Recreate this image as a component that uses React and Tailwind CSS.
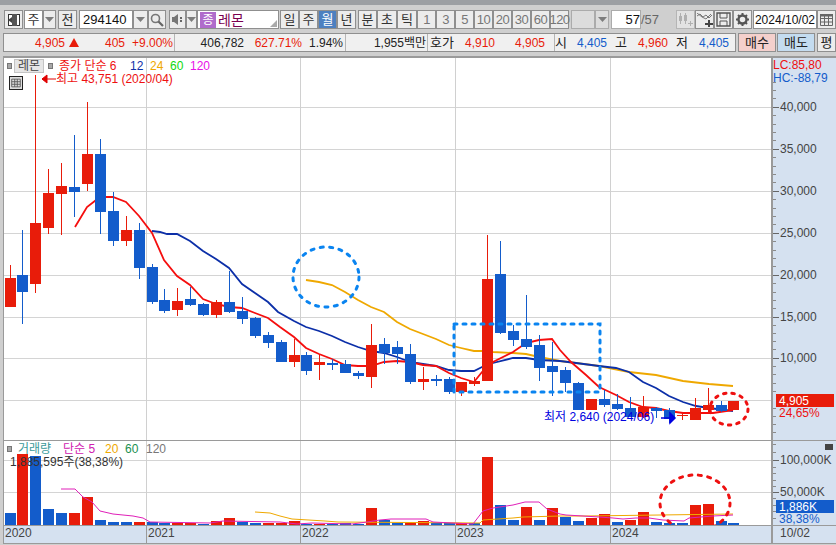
import React from 'react';

const FONT = 'font-["Liberation_Sans","Noto_Sans_CJK_KR",sans-serif]';
const RED = '#e81c0a';
const BLUE = '#135ccb';

// x, bodyTop, bodyBottom, wickTop, wickBottom, red?
const candles = [
  [10, 278, 307, 265, 307, 1], [22, 275, 292, 230, 324, 0], [35, 223, 284, 75, 293, 1], [48, 193, 228, 169, 234, 1],
  [61, 186, 194, 163, 235, 1], [74, 187, 192, 135, 217, 0], [87, 154, 184, 102, 191, 1], [100, 154, 212, 139, 234, 0],
  [113, 211, 241, 192, 246, 0], [126, 230, 241, 216, 246, 1], [139, 230, 268, 223, 279, 0], [152, 267, 302, 264, 304, 0],
  [164, 300, 311, 289, 313, 0], [177, 301, 310, 288, 316, 1], [190, 299, 305, 287, 306, 0], [203, 304, 315, 303, 316, 0],
  [216, 302, 315, 300, 318, 1], [229, 302, 312, 271, 313, 0], [242, 311, 319, 297, 324, 0], [255, 318, 336, 317, 338, 0],
  [268, 335, 343, 332, 348, 0], [281, 342, 362, 340, 362, 0], [294, 355, 362, 339, 367, 1], [306, 355, 371, 352, 375, 0],
  [319, 362, 365, 355, 380, 1], [332, 363, 365, 359, 370, 0], [345, 364, 373, 360, 373, 0], [358, 373, 376, 371, 379, 0],
  [371, 345, 377, 324, 388, 1], [384, 344, 353, 338, 364, 0], [397, 347, 354, 341, 364, 0], [410, 354, 382, 344, 384, 0],
  [423, 379, 382, 367, 390, 1], [436, 379, 381, 375, 386, 0], [449, 379, 392, 377, 394, 0], [461, 382, 392, 382, 396, 1],
  [474, 381, 384, 377, 386, 1], [487, 279, 381, 235, 381, 1], [500, 274, 333, 241, 334, 0], [513, 331, 340, 325, 346, 0],
  [526, 339, 347, 295, 349, 0], [539, 345, 368, 335, 381, 0], [552, 366, 372, 342, 396, 0], [565, 370, 383, 367, 392, 0],
  [578, 383, 410, 382, 410, 0], [591, 399, 410, 399, 410, 1], [604, 399, 405, 390, 407, 0], [617, 404, 409, 394, 410, 0],
  [630, 408, 417, 397, 417, 0], [643, 407, 417, 396, 418, 1], [656, 408, 411, 407, 418, 0], [669, 410, 419, 408, 423, 0],
  [682, 415, 416, 413, 420, 1], [695, 408, 420, 398, 420, 1], [708, 405, 410, 388, 413, 1], [721, 405, 411, 401, 412, 0],
  [733, 401, 410, 401, 410, 1],
];

// x, top, red?
const volumes = [
  [10, 513, 0], [22, 454, 1], [35, 456, 0], [48, 509, 0], [61, 513, 0], [74, 513, 1], [87, 497, 1], [100, 520, 0],
  [113, 522, 0], [126, 522, 0], [139, 522, 1], [152, 522, 0], [164, 523, 0], [177, 523, 1], [190, 523, 1], [203, 524, 0],
  [216, 521, 1], [229, 518, 1], [242, 522, 0], [255, 523, 0], [268, 523, 1], [281, 523, 1], [294, 521, 1], [306, 524, 0],
  [319, 524, 1], [332, 524, 0], [345, 523, 0], [358, 524, 0], [371, 508, 1], [384, 520, 0], [397, 523, 0], [410, 523, 1],
  [423, 521, 1], [436, 523, 0], [449, 523, 0], [461, 523, 1], [474, 523, 0], [487, 457, 1], [500, 505, 0], [513, 520, 0],
  [526, 507, 1], [539, 520, 0], [552, 508, 1], [565, 517, 0], [578, 521, 0], [591, 518, 1], [604, 514, 1], [617, 522, 0],
  [630, 520, 1], [643, 512, 1], [656, 522, 0], [669, 523, 0], [682, 523, 0], [695, 505, 1], [708, 504, 1], [721, 521, 0],
  [733, 523, 0],
];

const ma6 = '75,227 87,207 100,197 113,197 126,202 139,216 152,233 164,260 177,276 190,285 203,299 216,304 229,307 242,308 255,313 268,318 280,327 294,337 306,348 319,354 332,359 345,365 358,366 371,366 384,362 397,361 410,362 423,365 436,366 449,373 461,378 474,382 482,372 493,362 513,352 526,343 539,340 552,339 560,350 571,362 586,375 599,387 616,395 629,402 643,407 656,408 669,411 683,413 699,413 713,413 733,410';
const ma12 = '152,231 160,232 167,234 177,234 190,241 203,251 216,259 229,268 242,284 255,293 268,302 278,312 294,321 306,327 319,331 332,336 345,342 358,347 371,351 384,353 397,357 410,362 423,364 436,366 449,370 461,371 474,371 482,367 493,363 513,358 526,358 539,360 560,361 576,363 599,366 616,368 629,372 643,382 656,388 669,396 683,402 696,406 709,408 733,411';
const ma24 = '306,280 319,282 332,285 345,292 358,300 371,307 384,312 397,322 410,329 423,334 436,339 449,345 461,348 474,351 482,351 493,352 513,353 526,354 539,357 560,361 576,363 599,366 629,372 656,375 683,381 709,384 733,386';
const volMa5 = '61,489 75,489 83,497 92,502 100,511 113,514 133,516 143,518 150,522 210,523 223,521 280,522 297,524 312,523 352,524 367,522 380,520 391,519 426,519 433,522 473,524 483,511 493,508 513,505 525,502 539,502 547,509 560,514 566,515 583,516 599,517 613,518 623,519 636,518 649,518 663,520 684,521 689,518 713,516 733,515';
const volMa20 = '255,512 270,513 280,516 292,519 325,521 338,522 480,523 483,520 513,518 523,517 560,516 586,516 733,514';

const gridX = [146, 300, 455, 610];
const priceLines = [107, 149, 191, 233, 275, 317, 358, 400];
const priceLabels = [[107, '40,000'], [149, '35,000'], [191, '30,000'], [233, '25,000'], [275, '20,000'], [317, '15,000'], [358, '10,000']];

const Arrow = ({ className = '' }) => (
  <svg width="9" height="5" viewBox="0 0 9 5" className={className}><path d="M0 0h9L4.500 5z" fill="#7d7d7d" /></svg>
);

const Btn = ({ w, className = '', bg = 'bg-[#ececec]', color = 'text-[#333]', children }) => (
  <div
    style={{ width: w }}
    className={`h-[19px] shrink-0 flex items-center justify-center border border-[#8f8f8f] text-[13px] ${bg} ${color} ${className}`}
  >
    {children}
  </div>
);

const Dot = () => <span className="block w-[5px] h-[6px] shrink-0 bg-[#a8a8a8] border border-[#777]" />;

const Toolbar = () => (
  <div className="h-[28px] pl-[4px] pt-[5px] flex items-start bg-[#cfcfcf]">
    <Btn w={19}>
      <svg width="14" height="14" viewBox="0 0 14 14">
        <rect x="1.500" y="1.500" width="11" height="11" fill="#fff" stroke="#333" />
        <rect x="5" y="1" width="5" height="12" fill="#555" />
        <path d="M5 4 1 7l4 3z" fill="#444" />
      </svg>
    </Btn>
    <Btn w={19} className="ml-[1px]" bg="bg-white">주</Btn>
    <Btn w={13}><Arrow /></Btn>
    <Btn w={19} className="ml-[2px]">전</Btn>
    <div className="ml-[2px] w-[54px] h-[19px] flex items-center pl-[3px] bg-white border border-[#8f8f8f] text-[13px] text-[#111]">294140</div>
    <Btn w={15}><Arrow /></Btn>
    <Btn w={18}>
      <svg width="14" height="14" viewBox="0 0 14 14" fill="none">
        <circle cx="5.500" cy="5.500" r="4" stroke="#777" strokeWidth="1.600" />
        <path d="m8.500 8.500 4.500 4.500" stroke="#666" strokeWidth="2.200" />
      </svg>
    </Btn>
    <Btn w={17} className="ml-[3px]">
      <svg width="13" height="13" viewBox="0 0 13 13">
        <path d="M1 4h2l4-3v11L3 9H1z" fill="#777" />
        <rect x="9" y="4" width="2" height="2" fill="#666" />
        <rect x="9" y="7" width="2" height="2" fill="#666" />
      </svg>
    </Btn>
    <Btn w={11}><Arrow /></Btn>
    <div className="relative w-[82px] h-[19px] flex items-center gap-[2px] pl-[2px] bg-white border border-[#8f8f8f]">
      <span className="w-[16px] h-[16px] flex items-center justify-center bg-[#b06ccb] text-white text-[12px]">종</span>
      <span className="text-[14px] leading-none text-[#7a0050]">레몬</span>
      <svg width="7" height="7" viewBox="0 0 7 7" className="absolute right-[1px] bottom-[1px]"><path d="M7 0v7H0z" fill="#aaa" /></svg>
    </div>
    <Btn w={19} className="ml-[1px]">일</Btn>
    <Btn w={19}>주</Btn>
    <Btn w={19} bg="bg-[#4d80c0]" color="text-white">월</Btn>
    <Btn w={19}>년</Btn>
    <Btn w={19} className="ml-[2px]">분</Btn>
    <Btn w={20}>초</Btn>
    <Btn w={20}>틱</Btn>
    {['1', '3', '5', '10', '20', '30', '60', '120'].map((n) => (
      <Btn key={n} w={19} color="text-[#777]" className="text-[12px] tracking-[-0.5px]">{n}</Btn>
    ))}
    <div className="ml-[2px] w-[24px] h-[19px] bg-[#dcdcdc] border border-[#ababab]" />
    <div className="w-[14px] h-[19px] flex items-center justify-center bg-[#dcdcdc] border border-[#ababab]"><Arrow /></div>
    <div className="ml-[2px] w-[30px] h-[19px] flex items-center justify-end bg-white border border-[#ababab] text-[13px] text-[#111]">57</div>
    <div className="w-[35px] h-[19px] flex items-center text-[13px] text-[#666]">/57</div>
    <Btn w={19} bg="bg-[#e2e2e2]" className="border-[#b5b5b5]">
      <svg width="15" height="14" viewBox="0 0 15 14" fill="#b0b0b0">
        <rect x="1" y="3" width="3" height="5" /><rect x="6" y="2" width="3" height="6" /><rect x="2" y="0" width="1" height="11" /><rect x="7" y="0" width="1" height="11" />
        <path d="M10 10h2V8h1v2h2v1h-2v2h-1v-2h-2z" />
      </svg>
    </Btn>
    <Btn w={19}>
      <svg width="16" height="14" viewBox="0 0 16 14" fill="none">
        <path d="M0 3 3 1l3 3 3-2 3 3 3-3M0 0l5 4 4 2 5-5" stroke="#777" />
        <path d="M8 10h3V7h2v3h3v2h-3v2h-2v-2H8z" fill="#444" />
      </svg>
    </Btn>
    <Btn w={19}>
      <svg width="15" height="15" viewBox="0 0 15 15" fill="none" stroke="#555">
        <path d="M1 1h13v13H1z" strokeWidth="1.400" />
        <path d="M4 1v5h7V1M4 14V9h7v5" />
      </svg>
    </Btn>
    <Btn w={19}>
      <svg width="15" height="15" viewBox="0 0 15 15">
        <circle cx="7.500" cy="7.500" r="4" fill="none" stroke="#555" strokeWidth="2.400" />
        <path d="M7.500 1v3M7.500 11v3M1 7.500h3M11 7.500h3M3 3l2 2M10 10l2 2M12 3l-2 2M5 10l-2 2" stroke="#555" strokeWidth="2" />
      </svg>
    </Btn>
    <div className="ml-[1px] w-[64px] h-[19px] flex items-center justify-end pr-[1px] bg-white border border-[#8f8f8f] text-[12px] text-[#111]">2024/10/02</div>
    <Btn w={19}>
      <svg width="13" height="12" viewBox="0 0 13 12" fill="none" stroke="#666">
        <path d="M.500 .500h12v11H.500zM.500 4.500h12M.500 8h12M4.500 2v9.500M8.500 2v9.500" />
        <rect x="0" y="0" width="13" height="2.500" fill="#666" stroke="none" />
      </svg>
    </Btn>
  </div>
);

const Cell = ({ w, className = '', children }) => (
  <span style={{ width: w }} className={`shrink-0 text-right ${className}`}>{children}</span>
);

const InfoRow = () => (
  <div className="h-[23px] pl-[3px] flex items-start bg-[#cfcfcf] text-[12px] whitespace-nowrap">
    <div className="w-[733px] h-[19px] flex items-center bg-[#f0f0f0] border border-[#8f8f8f]">
      <div className="w-[171px] h-full flex items-center text-[#e81c0a] border-r border-[#b5b5b5]">
        <Cell w={61}>4,905</Cell>
        <svg width="10" height="9" viewBox="0 0 10 9" className="ml-[4px] shrink-0"><path d="M5 0l5 9H0z" fill="#e81c0a" /></svg>
        <Cell w={46}>405</Cell>
        <Cell w={48}>+9.00%</Cell>
      </div>
      <div className="w-[171px] h-full flex items-center border-r border-[#b5b5b5]">
        <Cell w={69} className="text-[#222]">406,782</Cell>
        <Cell w={58} className="text-[#e81c0a]">627.71%</Cell>
        <Cell w={41} className="text-[#222]">1.94%</Cell>
      </div>
      <div className="w-[82px] h-full flex items-center border-r border-[#b5b5b5]">
        <Cell w={80} className="text-[#222]">1,955백만</Cell>
      </div>
      <div className="w-[127px] h-full flex items-center border-r border-[#b5b5b5]">
        <span className="w-[28px] pl-[2px] text-[13px] text-[#222]">호가</span>
        <Cell w={39} className="text-[#e81c0a]">4,910</Cell>
        <Cell w={50} className="text-[#e81c0a]">4,905</Cell>
      </div>
      <div className="flex items-center">
        <Cell w={10} className="text-[#222] text-[13px]">시</Cell>
        <Cell w={42} className="text-[#135ccb]">4,405</Cell>
        <Cell w={20} className="text-[#222] text-[13px]">고</Cell>
        <Cell w={41} className="text-[#e81c0a]">4,960</Cell>
        <Cell w={20} className="text-[#222] text-[13px]">저</Cell>
        <Cell w={41} className="text-[#135ccb]">4,405</Cell>
      </div>
    </div>
    <div className="ml-[2px] w-[38px] h-[19px] flex items-center justify-center bg-[#f4d0cc] border border-[#8f8f8f] text-[13px] text-[#222]">매수</div>
    <div className="ml-[1px] w-[38px] h-[19px] flex items-center justify-center bg-[#c4dcf0] border border-[#8f8f8f] text-[13px] text-[#222]">매도</div>
    <div className="ml-[2px] w-[19px] h-[19px] flex items-center justify-center bg-[#ececec] border border-[#8f8f8f] text-[13px] text-[#222]">평</div>
  </div>
);

const Ticks = ({ lines, minor, h }) => (
  <svg className="absolute left-0 top-0" width="62" height={h} viewBox={`0 0 62 ${h}`}>
    {minor.map((y) => <rect key={y} x="0" y={y} width="3" height="1" fill="#8a8a8a" />)}
    {lines.map((y) => <rect key={y} x="0" y={y} width="6" height="1" fill="#666" />)}
  </svg>
);

const MainPane = () => (
  <div className="h-[383px] flex border-b border-[#9a9a9a]">
    <div className="relative w-[767px] bg-white">
      <svg className="absolute inset-0" width="767" height="382" viewBox="4 58 767 382">
        {priceLines.map((y) => <rect key={y} x="4" y={y} width="767" height="1" fill="#d4d4d4" />)}
        {gridX.map((x) => <rect key={x} x={x} y="58" width="1" height="382" fill="#d0d0d0" />)}
        <polyline points={ma24} fill="none" stroke="#efa800" strokeWidth="1.800" />
        <polyline points={ma12} fill="none" stroke="#0c2fa8" strokeWidth="1.800" />
        <polyline points={ma6} fill="none" stroke="#f50e0e" strokeWidth="1.800" />
        {candles.map(([x, t, b, wt, wb, up]) => (
          <g key={x} fill={up ? RED : BLUE}>
            <rect x={x} y={wt} width="1" height={wb - wt} />
            <rect x={x - 5} y={t} width="11" height={b - t} />
          </g>
        ))}
        <ellipse cx="326" cy="277" rx="33" ry="30" fill="none" stroke="#0a84f0" strokeWidth="3" strokeDasharray="3 6.500" strokeLinecap="round" />
        <rect x="454" y="324" width="146" height="68" fill="none" stroke="#0a84f0" strokeWidth="3" strokeDasharray="3 6" strokeLinecap="round" />
        <ellipse cx="729" cy="409" rx="19" ry="16" fill="none" stroke="#ee1010" strokeWidth="3" strokeDasharray="2.500 6" strokeLinecap="round" />
        <path d="M42 79h14M47 75l-5 4 5 4z" fill="#e00000" stroke="#e00000" />
        <path d="M661 418h11M670 413l5 5-5 5z" fill="#0000e0" stroke="#0000e0" strokeWidth="1.500" />
      </svg>

      <div className="relative h-[15px] flex items-center text-[12px] leading-none whitespace-nowrap">
        <span className="ml-[3px]"><Dot /></span>
        <span className="ml-[2px] w-[30px] h-[14px] flex items-center justify-center bg-[#e6e6e6] border border-[#c4c4c4] text-[#444]">레몬</span>
        <span className="ml-[4px]"><Dot /></span>
        <span className="ml-[6px] w-[71px] text-[#ee1010]">종가 단순 6</span>
        <span className="w-[20px] text-[#1030a8]">12</span>
        <span className="w-[20px] text-[#efa800]">24</span>
        <span className="w-[20px] text-[#10d810]">60</span>
        <span className="text-[#e810e8]">120</span>
      </div>
      <div className="relative flex items-start pl-[5px] whitespace-nowrap">
        <svg width="14" height="14" viewBox="0 0 14 14" className="mt-[3px] border border-[#222] bg-[#ddd]" fill="none" stroke="#555">
          <path d="M2 2.500h10v9H2zM2 5.500h10M2 8.500h10M5.500 2.500v9M8.500 2.500v9" />
        </svg>
        <span className="ml-[33px] text-[12px] leading-[13px] text-[#ee1010]">최고 43,751 (2020/04)</span>
      </div>
      <span className="absolute left-[540px] top-[353px] text-[12px] leading-[13px] text-[#0000e0] whitespace-nowrap">최저 2,640 (2024/06)</span>
    </div>

    <div className="relative w-[65px] bg-[#d5e1f0] border-l-2 border-[#9a9a9a]">
      <Ticks
        h={382}
        lines={[49, 91, 133, 175, 217, 259, 300]}
        minor={[24, 32, 40, 57, 66, 74, 82, 99, 108, 116, 124, 141, 150, 158, 166, 183, 192, 200, 208, 225, 234, 242, 250, 267, 275, 283, 291, 308, 316, 325, 333, 350, 358, 366, 374]}
      />
      <div className="relative text-[12px] leading-[14px] text-[#ee1010]">LC:85,80</div>
      <div className="relative text-[12px] leading-[12px] text-[#135ccb] whitespace-nowrap">HC:-88,79</div>
      {priceLabels.map(([y, text]) => (
        <span key={y} style={{ top: y - 58 - 7 }} className="absolute left-[7px] text-[12px] leading-[14px] text-[#444]">{text}</span>
      ))}
      <div className="absolute left-[3px] top-[336px] w-[58px] h-[13px] pl-[3px] flex items-center bg-[#e81c0a] text-white text-[12px]">4,905</div>
      <div className="absolute left-[6px] top-[349px] text-[12px] leading-[12px] text-[#ee1010]">24,65%</div>
    </div>
  </div>
);

const VolumePane = () => (
  <div className="h-[84px] flex">
    <div className="relative w-[767px] bg-white">
      <svg className="absolute inset-0" width="767" height="84" viewBox="4 441 767 84">
        <rect x="4" y="460" width="767" height="1" fill="#d4d4d4" />
        <rect x="4" y="492" width="767" height="1" fill="#d4d4d4" />
        {gridX.map((x) => <rect key={x} x={x} y="441" width="1" height="84" fill="#d0d0d0" />)}
        {volumes.map(([x, t, up]) => <rect key={x} x={x - 5} y={t} width="11" height={525 - t} fill={up ? RED : BLUE} />)}
        <polyline points={volMa20} fill="none" stroke="#efa800" strokeWidth="1" />
        <polyline points={volMa5} fill="none" stroke="#e020b8" strokeWidth="1" />
        <ellipse cx="695" cy="503" rx="35" ry="28" fill="none" stroke="#ee1010" strokeWidth="3" strokeDasharray="3 6.500" strokeLinecap="round" />
      </svg>
      <div className="relative h-[15px] pl-[3px] flex items-center text-[12px] leading-none whitespace-nowrap">
        <Dot />
        <span className="ml-[6px] w-[45px] text-[#3a9a9a]">거래량</span>
        <span className="w-[42px] text-[#d020b0]">단순 5</span>
        <span className="w-[20px] text-[#efa800]">20</span>
        <span className="w-[21px] text-[#1a9050]">60</span>
        <span className="text-[#777]">120</span>
      </div>
      <div className="relative pl-[6px] text-[12px] leading-[12px] text-[#333]">1,885,595주(38,38%)</div>
    </div>
    <div className="relative w-[65px] bg-[#d5e1f0] border-l-2 border-[#9a9a9a]">
      <Ticks h={84} lines={[19, 51]} minor={[3, 11, 26, 32, 39, 45, 57, 64, 70, 77]} />
      <span className="absolute right-[3px] top-[3px] w-[8px] h-[6px] bg-[#444]" />
      <span className="absolute left-[7px] top-[12px] text-[12px] leading-[14px] text-[#444]">100,000K</span>
      <span className="absolute left-[7px] top-[44px] text-[12px] leading-[14px] text-[#444]">50,000K</span>
      <div className="absolute left-[3px] top-[59px] w-[58px] h-[13px] pl-[3px] flex items-center bg-[#135ccb] text-white text-[12px]">1,886K</div>
      <div className="absolute left-[6px] top-[72px] text-[12px] leading-[12px] text-[#135ccb]">38,38%</div>
    </div>
  </div>
);

const TimeAxis = () => (
  <div className="h-[19px] flex bg-[#d5e1f0] border-t border-b border-[#9a9a9a] text-[12px] leading-[15px] text-[#444]">
    <span className="w-[142px] pl-[1px]">2020</span>
    <span className="w-[154px] pl-[1px] border-l border-[#9a9a9a]">2021</span>
    <span className="w-[155px] pl-[1px] border-l border-[#9a9a9a]">2022</span>
    <span className="w-[155px] pl-[1px] border-l border-[#9a9a9a]">2023</span>
    <span className="w-[161px] pl-[1px] border-l border-[#9a9a9a]">2024</span>
    <span className="flex-1 pl-[7px] border-l-2 border-[#9a9a9a]">10/02</span>
  </div>
);

export default function App() {
  return (
    <div className={`w-[836px] h-[545px] overflow-hidden bg-[#cfcfcf] ${FONT}`}>
      <div className="h-[5px] bg-[#9c9fa3]" />
      <Toolbar />
      <InfoRow />
      <div className="pl-[3px]">
        <div className="border-l border-t-2 border-[#9a9a9a]">
          <MainPane />
          <VolumePane />
          <TimeAxis />
        </div>
      </div>
    </div>
  );
}
